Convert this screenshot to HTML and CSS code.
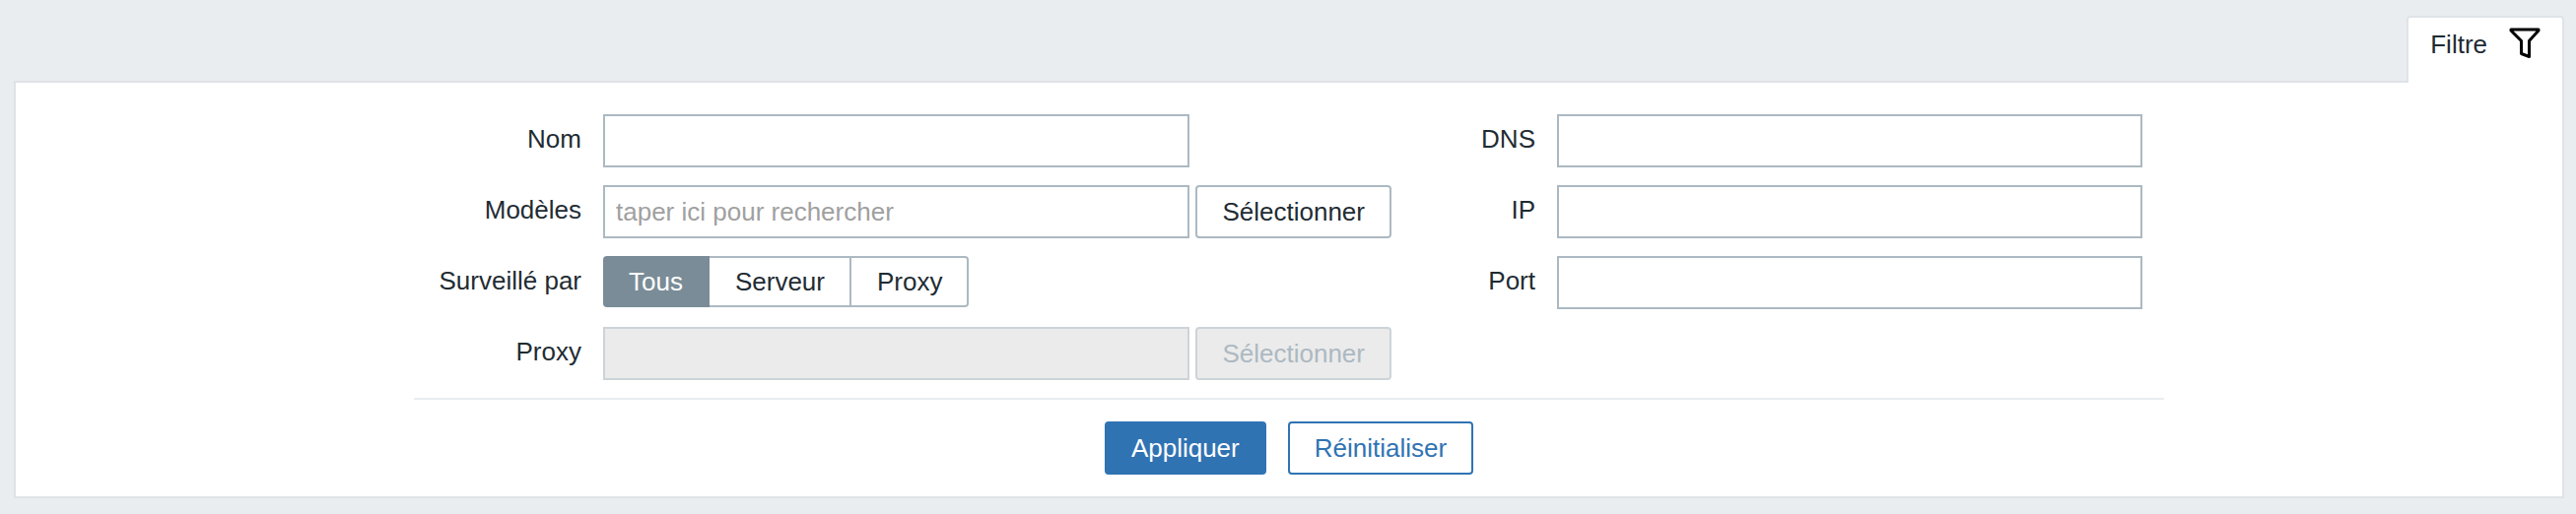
FILE: index.html
```html
<!DOCTYPE html>
<html lang="fr">
<head>
<meta charset="utf-8">
<title>Filtre</title>
<link rel="stylesheet" href="styles.css">
</head>
<body>
<main class="page">
  <div class="tabs">
    <button type="button" class="tab" aria-expanded="true">Filtre
      <svg class="tab-icon" viewBox="0 0 32 32" aria-hidden="true"><path d="M2 2H30V3L20.500 13.500V29.500L12.500 26.500V13.500L2 3Z" fill="none" stroke="#000" stroke-width="3" stroke-linejoin="round"/></svg>
    </button>
  </div>
  <form class="panel">
    <div class="columns">
      <div class="column column-main">
        <label class="label" for="name">Nom</label>
        <input class="field" id="name" type="text">
        <label class="label row-start" for="templates">Modèles</label>
        <input class="field" id="templates" type="text" placeholder="taper ici pour rechercher">
        <button type="button" class="button button-grey">Sélectionner</button>
        <span class="label row-start" id="monitored">Surveillé par</span>
        <div class="segments" role="radiogroup" aria-labelledby="monitored">
          <label class="segment"><input class="segment-radio" type="radio" name="by" checked><span class="segment-text">Tous</span></label>
          <label class="segment"><input class="segment-radio" type="radio" name="by"><span class="segment-text">Serveur</span></label>
          <label class="segment"><input class="segment-radio" type="radio" name="by"><span class="segment-text">Proxy</span></label>
        </div>
        <label class="label row-start" for="proxy">Proxy</label>
        <input class="field" id="proxy" type="text" disabled>
        <button type="button" class="button button-grey" disabled>Sélectionner</button>
      </div>
      <div class="column column-side">
        <label class="label" for="dns">DNS</label>
        <input class="field" id="dns" type="text">
        <label class="label" for="ip">IP</label>
        <input class="field" id="ip" type="text">
        <label class="label" for="port">Port</label>
        <input class="field" id="port" type="text">
      </div>
    </div>
    <div class="actions">
      <button type="submit" class="button button-primary">Appliquer</button>
      <button type="reset" class="button button-outline">Réinitialiser</button>
    </div>
  </form>
</main>
</body>
</html>
```
FILE: styles.css
```css
* { box-sizing: border-box; }

body {
  margin: 0;
  background: #e9edf0;
  color: #1f2c33;
  font: 26px/30px "Liberation Sans", Arial, sans-serif;
}

button, input { font: inherit; color: inherit; }

.page { padding: 16px 12px 16px 14px; }

.tabs { display: flex; justify-content: flex-end; }

.tab {
  z-index: 1;
  display: flex;
  align-items: flex-start;
  gap: 22px;
  height: 68px;
  margin-bottom: -2px;
  padding: 10px 22px 0;
  border: 2px solid #dfe3e7;
  border-bottom: 0;
  border-radius: 4px 4px 0 0;
  background: #fff;
  line-height: 34px;
}

.tab-icon { width: 32px; height: 32px; }

.panel {
  padding: 32px 22px 22px;
  border: 2px solid #dfe3e7;
  background: #fff;
}

.columns {
  display: flex;
  align-items: flex-start;
  max-width: 1776px;
  margin: 0 auto;
  padding: 0 22px 18px;
  border-bottom: 2px solid #e9edf0;
}

.column {
  display: grid;
  grid-auto-rows: 54px;
  gap: 18px 6px;
}

.column-main {
  flex: 970 1 0;
  grid-template-columns: 164px minmax(0, 1fr) auto;
}

.column-side {
  flex: 762 1 0;
  grid-template-columns: 162px minmax(0, 1fr);
}

.label {
  padding: 10px 16px 0 0;
  text-align: right;
  white-space: nowrap;
}

.row-start { grid-column: 1; }

.field {
  width: 100%;
  height: 54px;
  padding: 0 11px;
  border: 2px solid #acb9c2;
  border-radius: 0;
  background: #fff;
}

.field::placeholder { color: #a0a0a0; opacity: 1; }

.field:disabled { border-color: #cdd4d8; background: #ebebeb; }

.segments { display: flex; grid-column: 2 / 4; height: 52px; }

.segment { display: flex; }

.segment-radio {
  position: absolute;
  opacity: 0;
}

.segment-text {
  padding: 9px 25px 0 26px;
  border: 2px solid #acb9c2;
  border-left-width: 0;
}

.segment:first-child .segment-text {
  padding-right: 27px;
  border-width: 2px 0;
  border-radius: 4px 0 0 4px;
}

.segment:last-child .segment-text { border-radius: 0 4px 4px 0; }

.segment-radio:checked + .segment-text {
  border-color: #7a8c97;
  background: #7a8c97;
  color: #fff;
}

.button {
  height: 54px;
  padding: 0 25px;
  border: 2px solid #3073b3;
  border-radius: 4px;
  background: #fff;
}

.button-grey { border-color: #acb9c2; }
.button-grey:disabled { border-color: #cdd4d8; background: #ebebeb; color: #acb9c2; }
.button-primary { background: #3073b3; color: #fff; }
.button-outline { color: #3073b3; }

.actions {
  display: flex;
  justify-content: center;
  gap: 22px;
  padding-top: 22px;
}
```
